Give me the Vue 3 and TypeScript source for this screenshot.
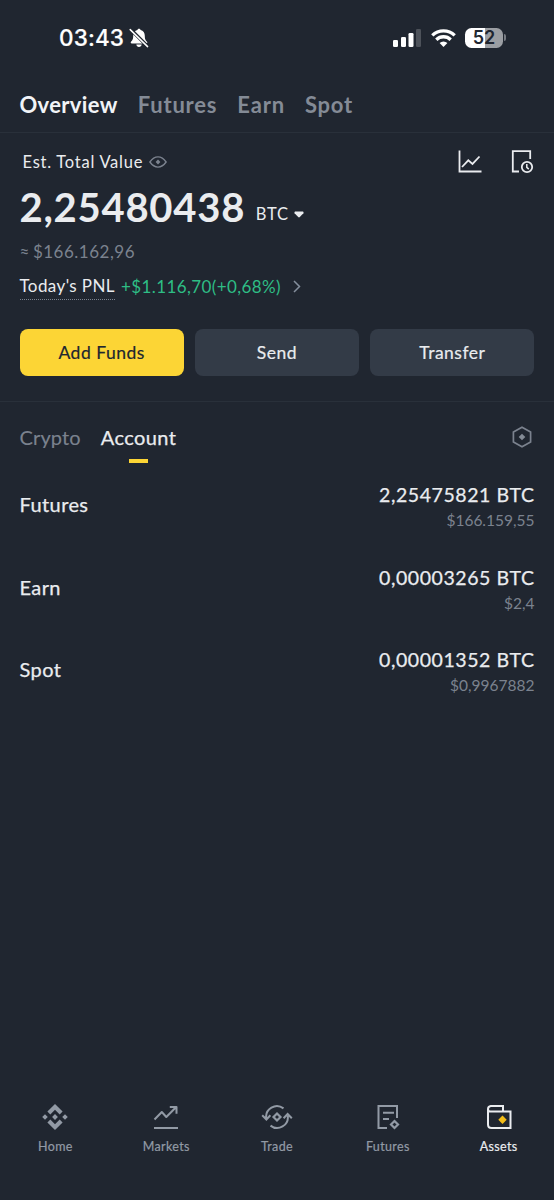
<script setup lang="ts">
import { ref } from 'vue'

interface Holding {
  name: string
  amount: string
  fiat: string
}

const sections: string[] = ['Overview', 'Futures', 'Earn', 'Spot']
const activeSection = ref('Overview')
const views: string[] = ['Crypto', 'Account']
const activeView = ref('Account')
const actions: string[] = ['Add Funds', 'Send', 'Transfer']
const holdings: Holding[] = [
  { name: 'Futures', amount: '2,25475821 BTC', fiat: '$166.159,55' },
  { name: 'Earn', amount: '0,00003265 BTC', fiat: '$2,4' },
  { name: 'Spot', amount: '0,00001352 BTC', fiat: '$0,9967882' },
]
const navItems: string[] = ['Home', 'Markets', 'Trade', 'Futures', 'Assets']
const activeNav = ref('Assets')
</script>

<template>
  <div class="screen">
    <div class="status">
      <span class="time">03:43</span>
      <svg class="bell" width="20" height="20" viewBox="0 0 20 20">
        <path d="M10 .8c.9 0 1.5.6 1.6 1.3 2.700.7 4.200 2.800 4.200 5.600 0 3.700.9 4.600 2.200 6.100.6.8.2 1.700-.8 1.700H2.800c-1 0-1.400-.9-.8-1.700C3.300 12.300 4.200 11.400 4.200 7.700c0-2.800 1.500-4.900 4.200-5.600C8.500 1.400 9.100.8 10 .8zM7.300 16.600h5.400c-.2 1.500-1.300 2.500-2.700 2.500s-2.500-1-2.700-2.500z" fill="#fff" />
        <path d="M1.500 1.300 18.500 18.300" stroke="#202630" stroke-width="3.400" />
        <path d="M1.200 1.600 18.600 18.600" stroke="#fff" stroke-width="1.500" stroke-linecap="round" />
      </svg>
      <div class="signals">
        <svg width="28" height="18" viewBox="0 0 28 18">
          <rect x="0" y="11" width="5" height="7" rx="1.300" fill="#fff" />
          <rect x="8" y="8" width="5" height="10" rx="1.300" fill="#fff" />
          <rect x="15.500" y="4" width="5" height="14" rx="1.300" fill="#fff" />
          <rect x="23" y="0" width="5" height="18" rx="1.300" fill="#4d525a" />
        </svg>
        <svg class="wifi" width="25" height="18" viewBox="0 0 25 18">
          <g fill="none" stroke="#fff" stroke-width="3.300">
            <path d="M1.300 6.400a16 16 0 0 1 22.400 0" />
            <path d="M5.300 10.700a10.300 10.300 0 0 1 14.400 0" />
          </g>
          <path d="M12.500 18 8.600 14.100a5.600 5.600 0 0 1 7.800 0z" fill="#fff" />
        </svg>
        <div class="battery"><span>52</span></div>
        <i class="cap"></i>
      </div>
    </div>

    <nav class="sections">
      <span v-for="s in sections" :key="s" class="section" :class="{ on: s === activeSection }" @click="activeSection = s">{{ s }}</span>
    </nav>

    <section class="summary">
      <div class="est">
        <span class="est-label">Est. Total Value</span>
        <svg class="eye" width="18" height="12" viewBox="0 0 18 12">
          <path d="M.9 6C3 3 5.700.9 9 .9S15 3 17.100 6C15 9 12.300 11.100 9 11.100S3 9 .9 6z" fill="none" stroke="#7b828e" stroke-width="1.400" />
          <path d="M9 3.600 11.400 6 9 8.400 6.600 6z" fill="#7b828e" />
        </svg>
        <div class="tools">
          <svg width="24" height="24" viewBox="0 0 24 24" fill="none" stroke="#eaecef" stroke-width="1.800">
            <path d="M1.500 .5v21H23.500" />
            <path d="M4 17 10.300 10.300l4.200 3.600 7-7.400" />
          </svg>
          <svg width="24" height="24" viewBox="0 0 24 24" fill="none" stroke="#eaecef" stroke-width="1.800">
            <path d="M9 21.500H2.800V1.200h17.400V9" />
            <circle cx="17" cy="17" r="5.200" />
            <path d="M16.800 14v3.300l2 1.800" stroke-width="1.500" />
          </svg>
        </div>
      </div>
      <div class="total">
        <span class="value">2,25480438</span>
        <span class="unit">BTC</span>
        <svg width="10" height="7" viewBox="0 0 10 7"><path d="M1 .5h8q1 .8.4 1.700L5.800 6q-.8.800-1.600 0L.6 2.200Q0 1.300 1 .5z" fill="#eaecef" /></svg>
      </div>
      <div class="approx"><span class="sign">≈</span>$166.162,96</div>
      <div class="pnl">
        <span class="pnl-label">Today's PNL</span>
        <span class="gain">+$1.116,70(+0,68%)</span>
        <svg width="8" height="13" viewBox="0 0 8 13" fill="none" stroke="#848e9c" stroke-width="1.500"><path d="m1 1 5.500 5.500L1 12" /></svg>
      </div>
      <div class="actions">
        <button v-for="a in actions" :key="a" class="action" :class="{ primary: a === 'Add Funds' }">{{ a }}</button>
      </div>
    </section>

    <div class="views">
      <span v-for="v in views" :key="v" class="view" :class="{ on: v === activeView }" @click="activeView = v">{{ v }}</span>
      <svg class="hex" width="20" height="22" viewBox="0 0 20 22">
        <path d="M10 1.200 18.600 6v10L10 20.800 1.400 16V6z" fill="none" stroke="#7b828e" stroke-width="1.700" />
        <path d="m10 7.700 3.300 3.300-3.300 3.300L6.700 11z" fill="#848b96" />
      </svg>
    </div>

    <main class="holdings">
      <div v-for="h in holdings" :key="h.name" class="holding">
        <span class="name">{{ h.name }}</span>
        <div class="figures">
          <span class="amount">{{ h.amount }}</span>
          <span class="fiat">{{ h.fiat }}</span>
        </div>
      </div>
    </main>

    <footer class="nav">
      <div v-for="n in navItems" :key="n" class="nav-item" :class="{ on: n === activeNav }" @click="activeNav = n">
        <svg width="32" height="28" viewBox="0 0 32 28" fill="none" stroke="#929aa5" stroke-width="2">
          <g v-if="n === 'Home'" fill="#929aa5" stroke="none">
            <path d="m16 1 7.600 7.600-2.900 2.900L16 6.800l-4.700 4.700-2.900-2.900z" />
            <path d="m16 27 7.600-7.600-2.900-2.900L16 21.200l-4.700-4.700-2.900 2.900z" />
            <path d="m16 11.100 2.900 2.900-2.900 2.900-2.900-2.900zM6 11.200 8.800 14 6 16.800 3.200 14zM26 11.200l2.800 2.800-2.800 2.800-2.800-2.800z" />
          </g>
          <g v-else-if="n === 'Markets'" stroke-linejoin="round">
            <path d="M4.500 16.500 11.800 9l4.500 5L26 4.300M19.800 4H26.500v6.700M4 25h24" />
          </g>
          <g v-else-if="n === 'Trade'">
            <path d="M22.500 5.400A10.700 10.700 0 0 0 5.300 15.500M1.200 12.300l4.200 4.200 4-4.200M9.500 22.600A10.700 10.700 0 0 0 26.700 12.500M22.600 15.200l4-4.200 4.200 4.200" />
            <path d="m16 10.500 3.500 3.500-3.500 3.500-3.500-3.500z" stroke-width="2.200" />
          </g>
          <g v-else-if="n === 'Futures'">
            <path d="M15 25H6.500V3H25v12M11 9.800h11M11 16h6" />
            <path d="m22.500 18 3.500 3.500-3.500 3.500-3.500-3.500z" stroke-width="2.200" />
          </g>
          <g v-else stroke="#eaecef">
            <path d="M5 6v15.500Q5 25 8.500 25h19V8.600H7.500Q5 8.600 5 6t2.800-3H20v5.300" />
            <path d="m19.500 12.500 4.200 4.200-4.200 4.200-4.200-4.200z" fill="#f3bd18" stroke="none" />
          </g>
        </svg>
        <span>{{ n }}</span>
      </div>
    </footer>
  </div>
</template>

<style>
body {
  margin: 0;
  background: #202630;
}
</style>

<style scoped>
.screen {
  width: 554px;
  height: 1200px;
  display: flex;
  flex-direction: column;
  background: #202630;
  color: #eaecef;
  font-family: Lato, 'Liberation Sans', sans-serif;
  white-space: nowrap;
  overflow: hidden;
}
.status {
  height: 75px;
  box-sizing: border-box;
  padding: 0 48px 0 59px;
  display: flex;
  align-items: center;
  color: #fff;
}
.time {
  font: 500 22.500px/30px Inter, sans-serif;
  letter-spacing: 0.15px;
  -webkit-text-stroke: 0.2px currentColor;
}
.bell {
  margin-left: 5px;
}
.signals {
  margin-left: auto;
  display: flex;
  align-items: center;
}
.wifi {
  margin-left: 10px;
}
.battery {
  margin-left: 9px;
  width: 38px;
  height: 20px;
  border-radius: 6.500px;
  background: linear-gradient(90deg, #fff 52%, #9b9ea3 52%);
  color: #202630;
  font: 600 18px/20px Inter, sans-serif;
  text-align: center;
}
.cap {
  width: 2px;
  height: 7px;
  margin-left: 1px;
  border-radius: 0 3px 3px 0;
  background: #777b82;
}
.sections {
  height: 58px;
  box-sizing: border-box;
  padding: 0 19.500px;
  display: flex;
  gap: 20px;
  border-bottom: 1px solid #29303a;
  font-size: 22px;
  line-height: 59px;
  font-weight: 700;
}
.section {
  color: #848b96;
  letter-spacing: 0.8px;
}
.section.on {
  color: #f2f4f7;
  letter-spacing: 0.35px;
}
.summary {
  height: 269px;
  box-sizing: border-box;
  padding: 14px 19.500px 0;
  border-bottom: 1px solid #29303a;
}
.est {
  height: 30px;
  display: flex;
  align-items: center;
  padding-left: 3px;
}
.est-label {
  font-size: 16.500px;
  line-height: 22px;
  letter-spacing: 0.75px;
}
.eye {
  margin-left: 6px;
}
.tools {
  margin: 0 1px 0 auto;
  display: flex;
  gap: 28px;
}
.total {
  height: 60px;
  display: flex;
  align-items: center;
}
.value {
  font-size: 40px;
  font-weight: 700;
  letter-spacing: 0.75px;
}
.unit {
  margin: 13px 5.500px 0 10.500px;
  font-size: 16.500px;
  letter-spacing: 0.8px;
}
.total svg {
  margin-top: 15px;
}
.approx {
  height: 30px;
  line-height: 30px;
  font-size: 17px;
  letter-spacing: 0.5px;
  color: #7b828e;
}
.sign {
  margin-right: 3px;
}
.pnl {
  height: 38px;
  display: flex;
  align-items: center;
}
.pnl-label {
  font-size: 17px;
  line-height: 26px;
  letter-spacing: 0.4px;
  border-bottom: 1px dotted #7b828e;
}
.gain {
  margin: 0 12px 0 6px;
  font-size: 17px;
  letter-spacing: 0.4px;
  color: #2ebd85;
}
.actions {
  margin-top: 24px;
  display: grid;
  grid-template-columns: repeat(3, 1fr);
  gap: 11px;
}
.action {
  height: 47px;
  padding: 0;
  border: 0;
  border-radius: 8px;
  background: #333b47;
  color: #eaecef;
  font: 400 17.500px Lato, sans-serif;
  letter-spacing: 0.5px;
  -webkit-text-stroke: 0.2px currentColor;
}
.action.primary {
  background: #fcd535;
  color: #202630;
}
.views {
  height: 62px;
  padding: 0 22px 0 19.500px;
  display: flex;
  align-items: flex-start;
  gap: 20px;
  font-size: 20px;
  line-height: 71px;
}
.view {
  height: 62px;
  color: #7b828e;
  letter-spacing: 0.15px;
  -webkit-text-stroke: 0.15px currentColor;
}
.view.on {
  color: #eaecef;
  display: flex;
  flex-direction: column;
  align-items: center;
  letter-spacing: 0.4px;
  -webkit-text-stroke-width: 0.25px;
}
.view.on::after {
  content: '';
  width: 19px;
  height: 4px;
  margin-top: -14px;
  background: #fcd535;
}
.hex {
  margin: 24px 0 0 auto;
}
.holdings {
  flex: 1;
}
.holding {
  height: 82.500px;
  padding: 0 19.500px;
  display: flex;
  justify-content: space-between;
}
.name {
  font-size: 20px;
  line-height: 81px;
  letter-spacing: 0.4px;
  -webkit-text-stroke: 0.25px currentColor;
}
.figures {
  display: flex;
  flex-direction: column;
  align-items: flex-end;
  padding-top: 17px;
}
.amount {
  font-size: 19.500px;
  line-height: 27px;
  letter-spacing: 0.57px;
  -webkit-text-stroke: 0.25px currentColor;
}
.fiat {
  font-size: 15.500px;
  line-height: 25px;
  color: #7b828e;
}
.nav {
  height: 97px;
  display: grid;
  grid-template-columns: repeat(5, 1fr);
}
.nav-item {
  display: flex;
  flex-direction: column;
  align-items: center;
  font-size: 12.500px;
  line-height: 20px;
  letter-spacing: 0.35px;
  color: #929aa5;
}
.nav-item span {
  margin-top: 6px;
  -webkit-text-stroke: 0.2px currentColor;
}
.nav-item.on {
  color: #eaecef;
}
</style>
